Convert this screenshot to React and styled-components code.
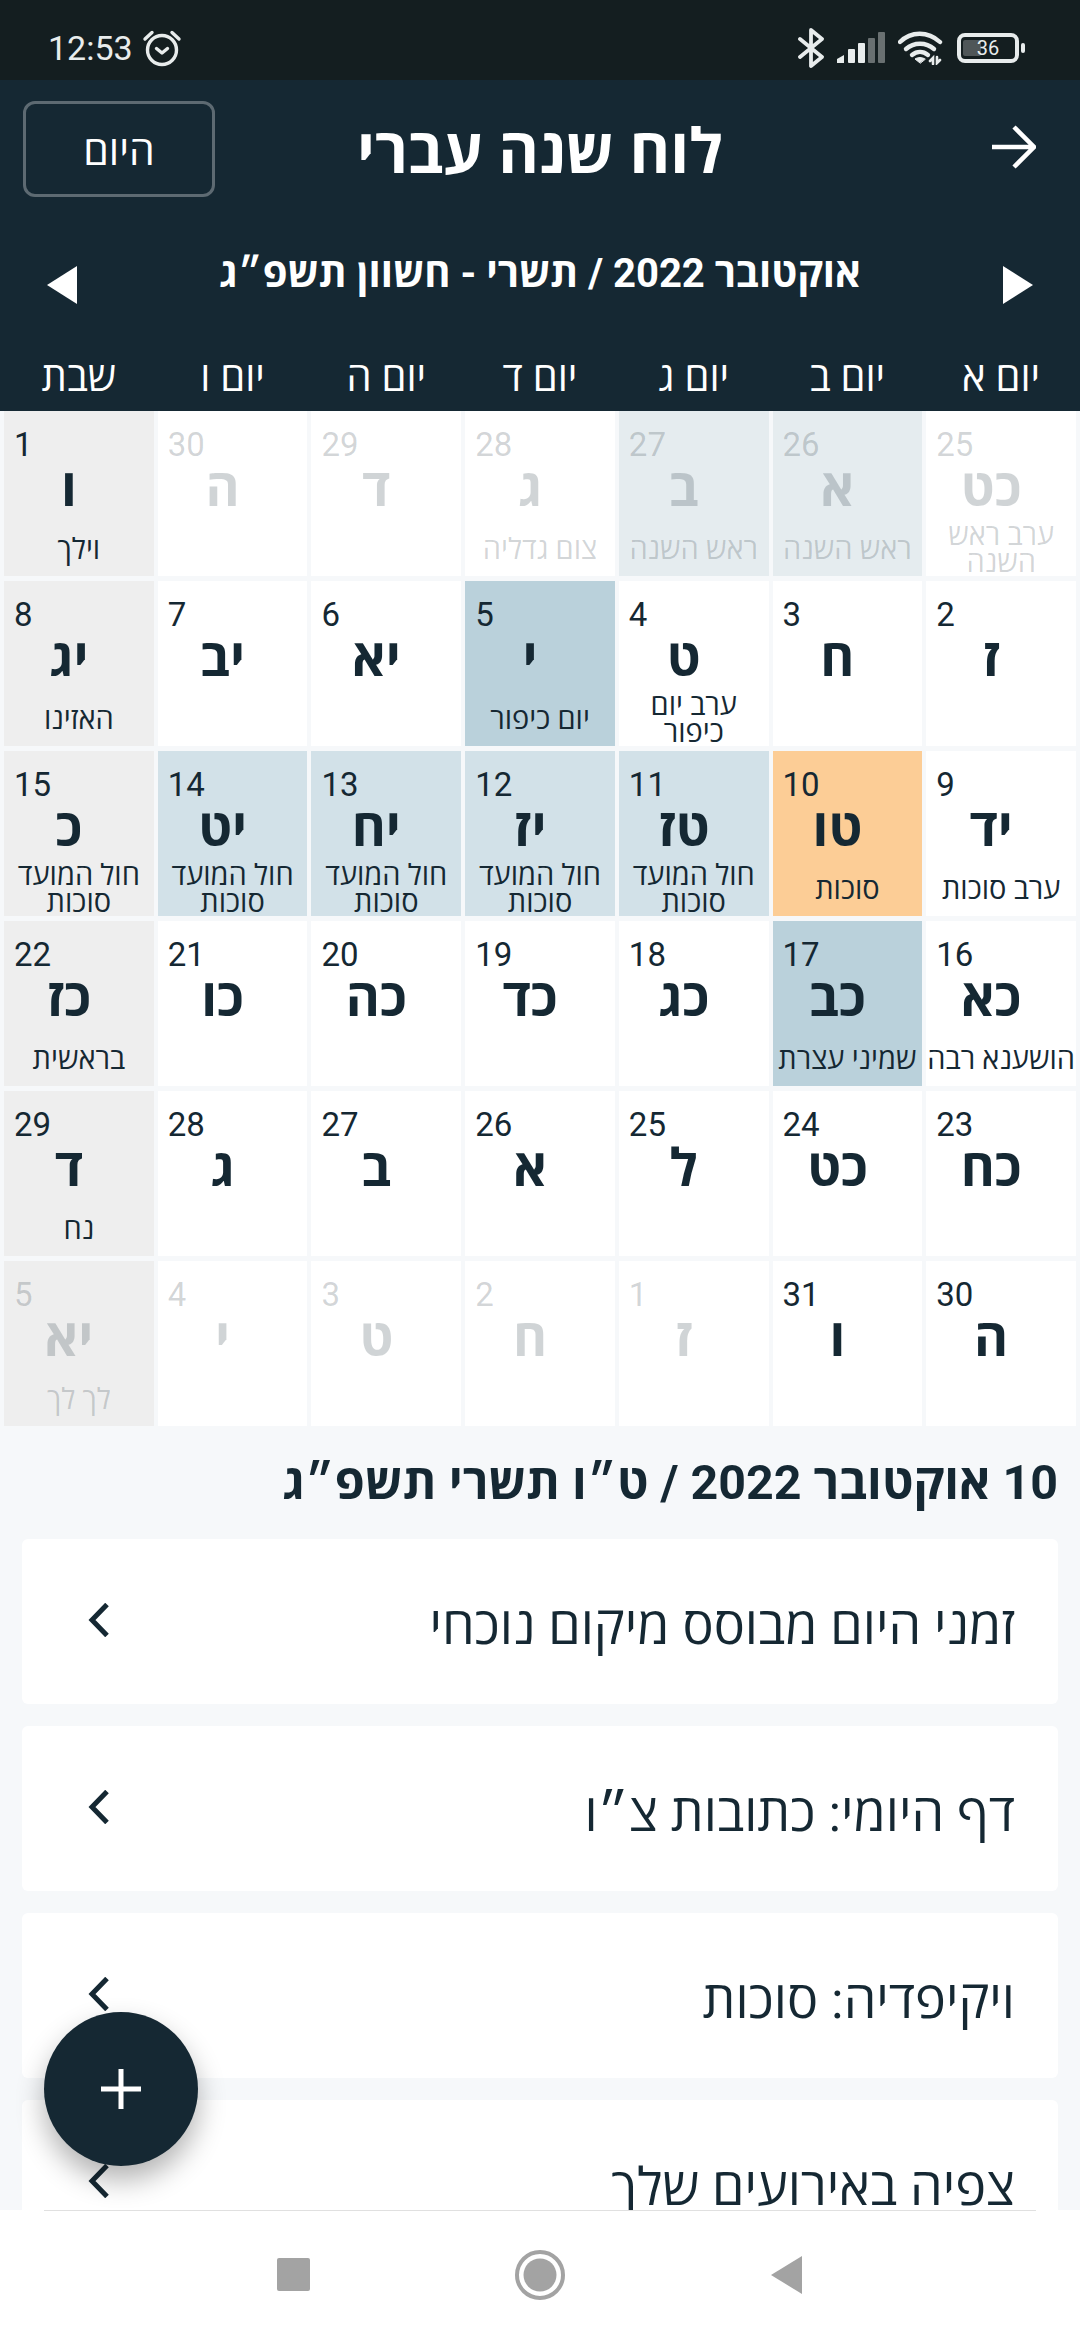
import React from 'react'
import styled, { createGlobalStyle } from 'styled-components'

const DARK = '#152833'

const GlobalStyle = createGlobalStyle`
  html, body {
    margin: 0;
    padding: 0;
    background: #f6f8fa;
  }
  body {
    font-family: Roboto, "Open Sans", sans-serif;
    color: ${DARK};
  }
`

const Page = styled.div`
  position: relative;
  width: 1080px;
  height: 2340px;
  overflow: hidden;
  display: flex;
  flex-direction: column;
  background: #f6f8fa;
`
const StatusBar = styled.div`
  height: 80px;
  flex: none;
  box-sizing: border-box;
  padding: 28px 55px 12px 48px;
  display: flex;
  align-items: center;
  justify-content: space-between;
  background: #141e20;
  color: #e8ecec;
`
const StatusGroup = styled.div`
  display: flex;
  align-items: center;
  gap: ${props => props.$gap || 9}px;
`
const Time = styled.span`
  font-size: 34px;
  line-height: 40px;
`
const Header = styled.header`
  flex: none;
  height: 331px;
  box-sizing: border-box;
  display: flex;
  flex-direction: column;
  background: ${DARK};
  color: #fff;
`
const TopRow = styled.div`
  height: 96px;
  margin-top: 21px;
  padding: 0 23px;
  display: grid;
  grid-template-columns: 1fr auto 1fr;
  align-items: center;
`
const TodayButton = styled.button`
  width: 192px;
  height: 96px;
  box-sizing: border-box;
  border: 3px solid #5d6a72;
  border-radius: 12px;
  background: transparent;
  color: #fff;
  font: inherit;
  font-size: 41px;
`
const Title = styled.h1`
  margin: 6px 0 0;
  font-size: 62px;
  line-height: 70px;
  font-weight: 700;
`
const BackArrow = styled.svg`
  width: 44px;
  height: 44px;
  justify-self: end;
  margin: -4px 21px 0 0;
`
const MonthRow = styled.div`
  height: 64px;
  margin-top: 56px;
  padding: 0 47px;
  display: flex;
  align-items: center;
  justify-content: space-between;
`
const MonthLabel = styled.div`
  margin-top: -28px;
  font-size: 40px;
  font-weight: 700;
`
const Weekdays = styled.div`
  display: grid;
  grid-template-columns: repeat(7, 1fr);
  gap: 4px;
  padding: 0 4px;
  margin-top: 39px;
`
const Weekday = styled.div`
  text-align: center;
  font-size: 40px;
  line-height: 44px;
`
const Scroll = styled.main`
  flex: 1;
  min-height: 0;
  overflow: hidden;
`
const Calendar = styled.div`
  display: grid;
  grid-template-columns: repeat(7, 1fr);
  grid-auto-rows: 165px;
  gap: 5px 4px;
  padding: 0 4px;
`
const CELL_BG = {
  plain: '#ffffff',
  sat: '#eeeeee',
  fast: '#bad1db',
  chol: '#d2e1e8',
  rosh: '#e5ecef',
  today: '#fccd96',
}
const Cell = styled.div`
  display: flex;
  flex-direction: column;
  padding-top: 16px;
  box-sizing: border-box;
  background: ${props => CELL_BG[props.$kind]};
  color: ${props => (props.$dim ? 'rgba(21, 40, 51, 0.2)' : DARK)};
`
const DayNum = styled.div`
  padding-left: 10px;
  text-align: left;
  font-size: 33px;
  line-height: 36px;
`
const HebDay = styled.div`
  padding-right: 20px;
  text-align: center;
  font-size: 52px;
  font-weight: 700;
  line-height: 52px;
`
const Holiday = styled.div`
  margin-top: auto;
  height: 52px;
  box-sizing: border-box;
  padding-bottom: 2px;
  display: flex;
  align-items: center;
  justify-content: center;
  text-align: center;
  font-size: 29px;
  line-height: 27px;
`
const DateHeading = styled.h2`
  margin: 0;
  padding: 29px 22px 0;
  height: 84px;
  box-sizing: border-box;
  font-size: 48.4px;
  line-height: 56px;
  font-weight: 700;
`
const Cards = styled.div`
  padding: 29px 22px 0;
  display: flex;
  flex-direction: column;
  gap: 22px;
`
const Card = styled.div`
  height: 165px;
  flex: none;
  box-sizing: border-box;
  padding: 3px 43px 0 66px;
  display: flex;
  align-items: center;
  justify-content: space-between;
  background: #fff;
  border-radius: 6px;
  font-size: 52px;
`
const Chevron = styled.svg`
  width: 22px;
  height: 34px;
  margin-top: -7px;
  flex: none;
`
const Fab = styled.button`
  position: absolute;
  left: 44px;
  top: 2012px;
  width: 154px;
  height: 154px;
  padding: 0;
  border: 0;
  border-radius: 50%;
  background: ${DARK};
  box-shadow: 0 14px 28px rgba(0, 0, 0, 0.3);
  display: flex;
  align-items: center;
  justify-content: center;
`
const NavBar = styled.nav`
  position: relative;
  flex: none;
  height: 130px;
  background: #fff;
  display: flex;
  align-items: flex-start;
  justify-content: center;
  gap: 196px;
  box-sizing: border-box;
  padding-top: 40px;
  &::before {
    content: '';
    position: absolute;
    top: 0;
    left: 44px;
    right: 44px;
    height: 1px;
    background: #e0e0e0;
  }
`
const NavIcon = styled.svg`
  width: 50px;
  height: 50px;
  flex: none;
`

const WEEKDAYS = ['יום א', 'יום ב', 'יום ג', 'יום ד', 'יום ה', 'יום ו', 'שבת']

const CHOL = 'חול המועד סוכות'
const DAYS = [
  { n: 25, h: 'כט', l: 'ערב ראש השנה', dim: true },
  { n: 26, h: 'א', l: 'ראש השנה', dim: true, kind: 'rosh' },
  { n: 27, h: 'ב', l: 'ראש השנה', dim: true, kind: 'rosh' },
  { n: 28, h: 'ג', l: 'צום גדליה', dim: true },
  { n: 29, h: 'ד', dim: true },
  { n: 30, h: 'ה', dim: true },
  { n: 1, h: 'ו', l: 'וילך', kind: 'sat' },
  { n: 2, h: 'ז' },
  { n: 3, h: 'ח' },
  { n: 4, h: 'ט', l: 'ערב יום כיפור' },
  { n: 5, h: 'י', l: 'יום כיפור', kind: 'fast' },
  { n: 6, h: 'יא' },
  { n: 7, h: 'יב' },
  { n: 8, h: 'יג', l: 'האזינו', kind: 'sat' },
  { n: 9, h: 'יד', l: 'ערב סוכות' },
  { n: 10, h: 'טו', l: 'סוכות', kind: 'today' },
  { n: 11, h: 'טז', l: CHOL, kind: 'chol' },
  { n: 12, h: 'יז', l: CHOL, kind: 'chol' },
  { n: 13, h: 'יח', l: CHOL, kind: 'chol' },
  { n: 14, h: 'יט', l: CHOL, kind: 'chol' },
  { n: 15, h: 'כ', l: CHOL, kind: 'sat' },
  { n: 16, h: 'כא', l: 'הושענא רבה' },
  { n: 17, h: 'כב', l: 'שמיני עצרת', kind: 'fast' },
  { n: 18, h: 'כג' },
  { n: 19, h: 'כד' },
  { n: 20, h: 'כה' },
  { n: 21, h: 'כו' },
  { n: 22, h: 'כז', l: 'בראשית', kind: 'sat' },
  { n: 23, h: 'כח' },
  { n: 24, h: 'כט' },
  { n: 25, h: 'ל' },
  { n: 26, h: 'א' },
  { n: 27, h: 'ב' },
  { n: 28, h: 'ג' },
  { n: 29, h: 'ד', l: 'נח', kind: 'sat' },
  { n: 30, h: 'ה' },
  { n: 31, h: 'ו' },
  { n: 1, h: 'ז', dim: true },
  { n: 2, h: 'ח', dim: true },
  { n: 3, h: 'ט', dim: true },
  { n: 4, h: 'י', dim: true },
  { n: 5, h: 'יא', l: 'לך לך', dim: true, kind: 'sat' },
]

const ITEMS = ['זמני היום מבוסס מיקום נוכחי', 'דף היומי: כתובות צ״ו', 'ויקיפדיה: סוכות', 'צפיה באירועים שלך']

const AlarmIcon = () => (
  <svg width="40" height="38" viewBox="0 0 40 38" fill="none" stroke="currentColor" strokeWidth="3.4" strokeLinecap="round" strokeLinejoin="round">
    <circle cx="20" cy="21" r="14.5" />
    <path d="M14.5 19.5 20 24l5.5-4.5" />
    <path d="M3 10 10 3.5M37 10 30 3.5" />
  </svg>
)

const BluetoothIcon = () => (
  <svg width="26" height="40" viewBox="0 0 26 40" fill="none" stroke="currentColor" strokeWidth="3.8" strokeLinejoin="round" strokeLinecap="round">
    <path d="M2 11 24 29 13 38V2l11 9L2 29" />
  </svg>
)

const SignalIcon = () => (
  <svg width="48" height="32" viewBox="0 0 48 32" fill="currentColor">
    <path d="M0 31v-4l7-4v8z" />
    <rect x="11" y="17" width="7" height="14" rx="1" />
    <rect x="21" y="11" width="7" height="20" rx="1" />
    <rect x="31" y="6" width="7" height="25" rx="1" opacity="0.4" />
    <rect x="41" y="0" width="7" height="31" rx="1" opacity="0.4" />
  </svg>
)

const WifiIcon = () => (
  <svg width="46" height="34" viewBox="0 0 46 34" fill="none" stroke="currentColor" strokeWidth="4.4" strokeLinecap="round">
    <path d="M2 11C13 0 30 0 42 11" />
    <path d="M8 18c8-7 20-7 28 0" />
    <path d="M14 24c5-4 11-4 16 0" />
    <path d="M22 32l-5-4c3-2 7-2 10 0z" fill="currentColor" strokeWidth="1" />
    <path d="M35 33v-6l-3 3M39 26v6l3-3" strokeWidth="2.6" />
  </svg>
)

const BatteryBox = styled.div`
  position: relative;
  width: 62px;
  height: 30px;
  box-sizing: border-box;
  border: 4px solid currentColor;
  border-radius: 8px;
  font-size: 20px;
  line-height: 22px;
  text-align: center;
  margin-right: 6px;
  &::before {
    content: '';
    position: absolute;
    left: 2px;
    top: 3px;
    bottom: 3px;
    width: 18px;
    border-radius: 2px;
    background: rgba(255, 255, 255, 0.25);
  }
  &::after {
    content: '';
    position: absolute;
    right: -10px;
    top: 6px;
    width: 4px;
    height: 10px;
    border-radius: 2px;
    background: currentColor;
  }
`

const ChevronLeft = () => (
  <Chevron viewBox="0 0 22 34" fill="none" stroke={DARK} strokeWidth="5" strokeLinecap="butt">
    <path d="M19 1.5 4 17l15 15.5" />
  </Chevron>
)

const Triangle = ({ dir }) => (
  <svg width="30" height="38" viewBox="0 0 30 38" fill="#fff">
    <path d={dir === 'left' ? 'M30 0v38L0 19z' : 'M0 0v38l30-19z'} />
  </svg>
)

export default function App() {
  return (
    <Page>
      <GlobalStyle />
      <StatusBar>
        <StatusGroup>
          <Time>12:53</Time>
          <AlarmIcon />
        </StatusGroup>
        <StatusGroup $gap={13}>
          <BluetoothIcon />
          <SignalIcon />
          <WifiIcon />
          <BatteryBox>36</BatteryBox>
        </StatusGroup>
      </StatusBar>
      <Header>
        <TopRow>
          <TodayButton dir="rtl">היום</TodayButton>
          <Title dir="rtl">לוח שנה עברי</Title>
          <BackArrow viewBox="0 0 44 44" fill="none" stroke="#fff" strokeWidth="4.5">
            <path d="M0 22h41M22 2l20 20-20 20" />
          </BackArrow>
        </TopRow>
        <MonthRow>
          <Triangle dir="left" />
          <MonthLabel dir="rtl">אוקטובר 2022 / תשרי - חשוון תשפ״ג</MonthLabel>
          <Triangle dir="right" />
        </MonthRow>
        <Weekdays dir="rtl">
          {WEEKDAYS.map(d => <Weekday key={d}>{d}</Weekday>)}
        </Weekdays>
      </Header>
      <Scroll>
        <Calendar dir="rtl">
          {DAYS.map((d, i) => (
            <Cell key={i} $kind={d.kind || 'plain'} $dim={d.dim}>
              <DayNum>{d.n}</DayNum>
              <HebDay>{d.h}</HebDay>
              {d.l && <Holiday>{d.l}</Holiday>}
            </Cell>
          ))}
        </Calendar>
        <DateHeading dir="rtl">10 אוקטובר 2022 / ט״ו תשרי תשפ״ג</DateHeading>
        <Cards dir="rtl">
          {ITEMS.map(t => (
            <Card key={t}>
              <span>{t}</span>
              <ChevronLeft />
            </Card>
          ))}
        </Cards>
      </Scroll>
      <Fab aria-label="add">
        <svg width="40" height="40" viewBox="0 0 40 40" stroke="#fff" strokeWidth="5">
          <path d="M20 0v40M0 20h40" />
        </svg>
      </Fab>
      <NavBar>
        <NavIcon viewBox="0 0 50 50" fill="#a3a3a3">
          <rect x="8" y="8" width="33" height="33" rx="2" />
        </NavIcon>
        <NavIcon viewBox="0 0 50 50" fill="#a3a3a3">
          <circle cx="25" cy="25" r="16.5" />
          <circle cx="25" cy="25" r="23" fill="none" stroke="#a3a3a3" strokeWidth="4" />
        </NavIcon>
        <NavIcon viewBox="0 0 50 50" fill="#a3a3a3">
          <path d="M41 6v38L10 25z" />
        </NavIcon>
      </NavBar>
    </Page>
  )
}
